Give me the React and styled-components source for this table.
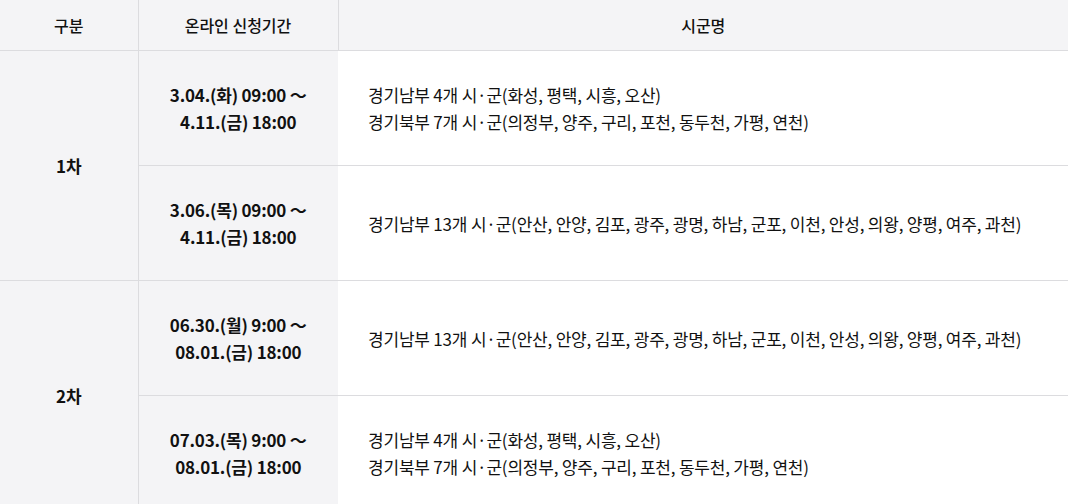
import React from 'react'
import styled, { createGlobalStyle } from 'styled-components';

const GlobalStyle = createGlobalStyle`
body {
    margin: 0;
    background: #fff;
    font-family: "Noto Sans CJK KR", "Noto Sans", sans-serif;
    color: #111;
}
`;

const rounds = [
    {
        name: '1차',
        items: [
            { start: '3.04.(화) 09:00 ～', end: '4.11.(금) 18:00', lines: ['경기남부 4개 시·군(화성, 평택, 시흥, 오산)', '경기북부 7개 시·군(의정부, 양주, 구리, 포천, 동두천, 가평, 연천)'] },
            { start: '3.06.(목) 09:00 ～', end: '4.11.(금) 18:00', lines: ['경기남부 13개 시·군(안산, 안양, 김포, 광주, 광명, 하남, 군포, 이천, 안성, 의왕, 양평, 여주, 과천)'] },
        ],
    },
    {
        name: '2차',
        items: [
            { start: '06.30.(월) 9:00 ～', end: '08.01.(금) 18:00', lines: ['경기남부 13개 시·군(안산, 안양, 김포, 광주, 광명, 하남, 군포, 이천, 안성, 의왕, 양평, 여주, 과천)'] },
            { start: '07.03.(목) 9:00 ～', end: '08.01.(금) 18:00', lines: ['경기남부 4개 시·군(화성, 평택, 시흥, 오산)', '경기북부 7개 시·군(의정부, 양주, 구리, 포천, 동두천, 가평, 연천)'] },
        ],
    },
];

const App = () => {
    return (
        <>
            <GlobalStyle />
            <Table>
                <colgroup>
                    <col style={{ width: 138 }} />
                    <col style={{ width: 200 }} />
                    <col />
                </colgroup>
                <thead>
                    <tr>
                        <Th>구분</Th>
                        <Th>온라인 신청기간</Th>
                        <Th last>시군명</Th>
                    </tr>
                </thead>
                <tbody>
                    {rounds.map((round) =>
                        round.items.map((item, i) => (
                            <Row key={round.name + i}>
                                {i === 0 && <RoundCell rowSpan={round.items.length}>{round.name}</RoundCell>}
                                <DateCell>
                                    {item.start}<br />{item.end}
                                </DateCell>
                                <AreaCell>
                                    {item.lines.map((l) => <div key={l}>{l}</div>)}
                                </AreaCell>
                            </Row>
                        ))
                    )}
                </tbody>
            </Table>
        </>
    )
}

export default App


const Table = styled.table`
width: 1068px;
border-collapse: collapse;
table-layout: fixed;
`;

const Th = styled.th`
height: 50px;
padding: 0;
background-color: #f4f4f6;
border-bottom: 1px solid #dcdcdf;
border-right: ${props => props.last ? 'none' : '1px solid #dcdcdf'};
font-size: 16px;
font-weight: 500;
color: #111;
text-align: center;
vertical-align: middle;
`;

const Row = styled.tr`
height: 115px;
td {
    border-bottom: 1px solid #dcdcdf;
}
`;

const RoundCell = styled.td`
background-color: #f4f4f6;
border-right: 1px solid #dcdcdf;
font-size: 17px;
font-weight: 700;
text-align: center;
vertical-align: middle;
padding: 0;
`;

const DateCell = styled.td`
background-color: #f4f4f6;
font-size: 17px;
font-weight: 700;
line-height: 27px;
letter-spacing: -0.2px;
text-align: center;
vertical-align: middle;
padding: 0;
`;

const AreaCell = styled.td`
background-color: #fff;
font-size: 17px;
font-weight: 400;
line-height: 27px;
letter-spacing: -0.2px;
text-align: left;
vertical-align: middle;
padding: 0 0 0 30px;
`;
